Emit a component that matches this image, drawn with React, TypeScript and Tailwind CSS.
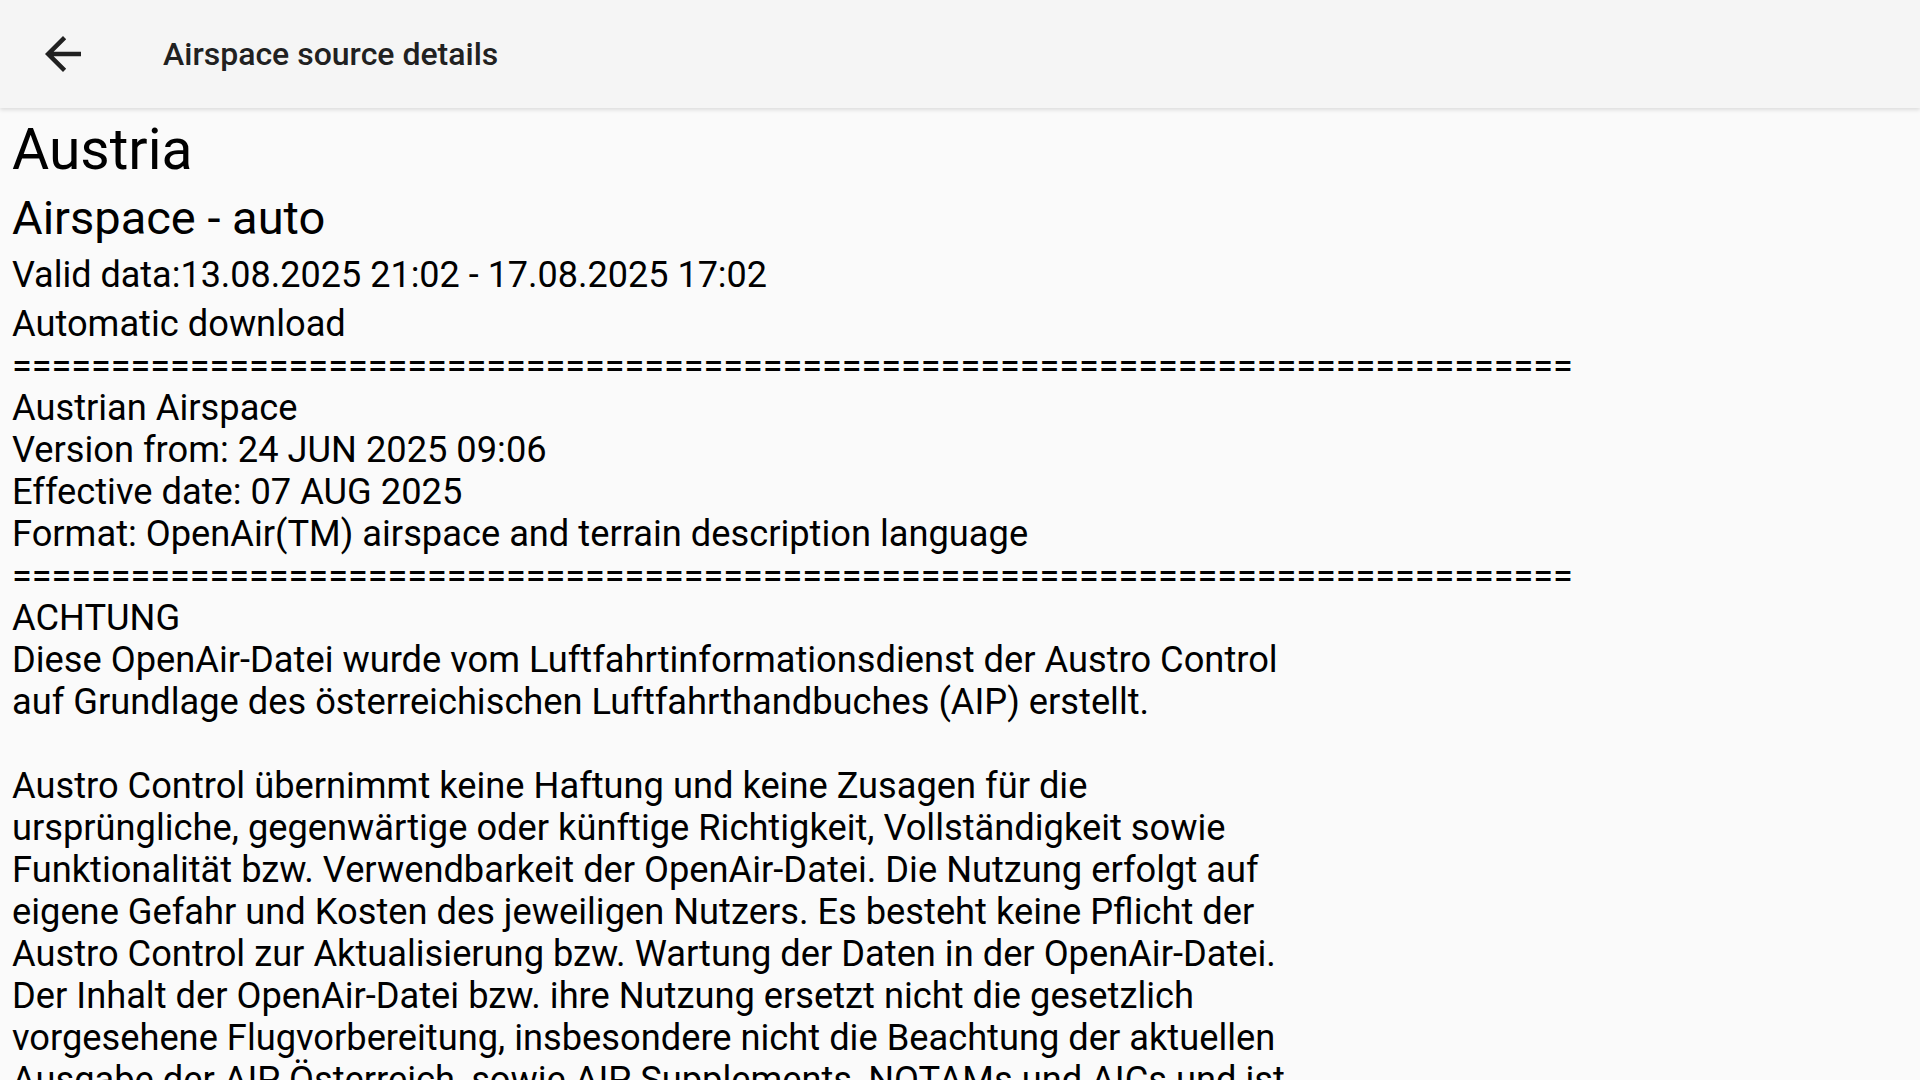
import React from "react";

const EQ = "=".repeat(79);

const lines: string[] = [
  "Automatic download",
  EQ,
  "Austrian Airspace",
  "Version from: 24 JUN 2025 09:06",
  "Effective date: 07 AUG 2025",
  "Format: OpenAir(TM) airspace and terrain description language",
  EQ,
  "ACHTUNG",
  "Diese OpenAir-Datei wurde vom Luftfahrtinformationsdienst der Austro Control",
  "auf Grundlage des österreichischen Luftfahrthandbuches (AIP) erstellt.",
  "",
  "Austro Control übernimmt keine Haftung und keine Zusagen für die",
  "ursprüngliche, gegenwärtige oder künftige Richtigkeit, Vollständigkeit sowie",
  "Funktionalität bzw. Verwendbarkeit der OpenAir-Datei. Die Nutzung erfolgt auf",
  "eigene Gefahr und Kosten des jeweiligen Nutzers. Es besteht keine Pflicht der",
  "Austro Control zur Aktualisierung bzw. Wartung der Daten in der OpenAir-Datei.",
  "Der Inhalt der OpenAir-Datei bzw. ihre Nutzung ersetzt nicht die gesetzlich",
  "vorgesehene Flugvorbereitung, insbesondere nicht die Beachtung der aktuellen",
  "Ausgabe der AIP Österreich, sowie AIP Supplements, NOTAMs und AICs und ist",
  "daher nicht für navigatorische Zwecke geeignet.",
];

export default function App() {
  return (
    <div
      className="w-[1920px] h-[1080px] overflow-hidden bg-[#fafafa] flex flex-col"
      style={{ fontFamily: "Roboto, 'Noto Sans', sans-serif" }}
    >
      <header className="relative z-10 h-[108px] shrink-0 bg-[#f5f5f5] flex items-center pl-[36px] shadow-[0_2px_4px_rgba(0,0,0,0.12)]">
        <svg width="54" height="54" viewBox="0 0 24 24" className="shrink-0">
          <path
            d="M20 11H7.83l5.59-5.59L12 4l-8 8 8 8 1.41-1.41L7.83 13H20v-2z"
            fill="#212121"
          />
        </svg>
        <div className="ml-[73px] text-[32px] font-medium text-[#212121] leading-none">
          Airspace source details
        </div>
      </header>
      <main className="pl-[12px] text-black">
        <div className="mt-[8px] text-[57px] leading-[67px]">Austria</div>
        <div className="mt-[7px] text-[47px] leading-[55px]">Airspace - auto</div>
        <div className="mt-[9px] text-[36px] leading-[42px]">
          Valid data:13.08.2025 21:02 - 17.08.2025 17:02
        </div>
        <div className="mt-[7px] text-[36.25px] leading-[42px] whitespace-pre">
          {lines.map((l, i) => (
            <div key={i} className={l === EQ ? "h-[42px] text-[36px]" : "h-[42px]"}>
              {l}
            </div>
          ))}
        </div>
      </main>
    </div>
  );
}
